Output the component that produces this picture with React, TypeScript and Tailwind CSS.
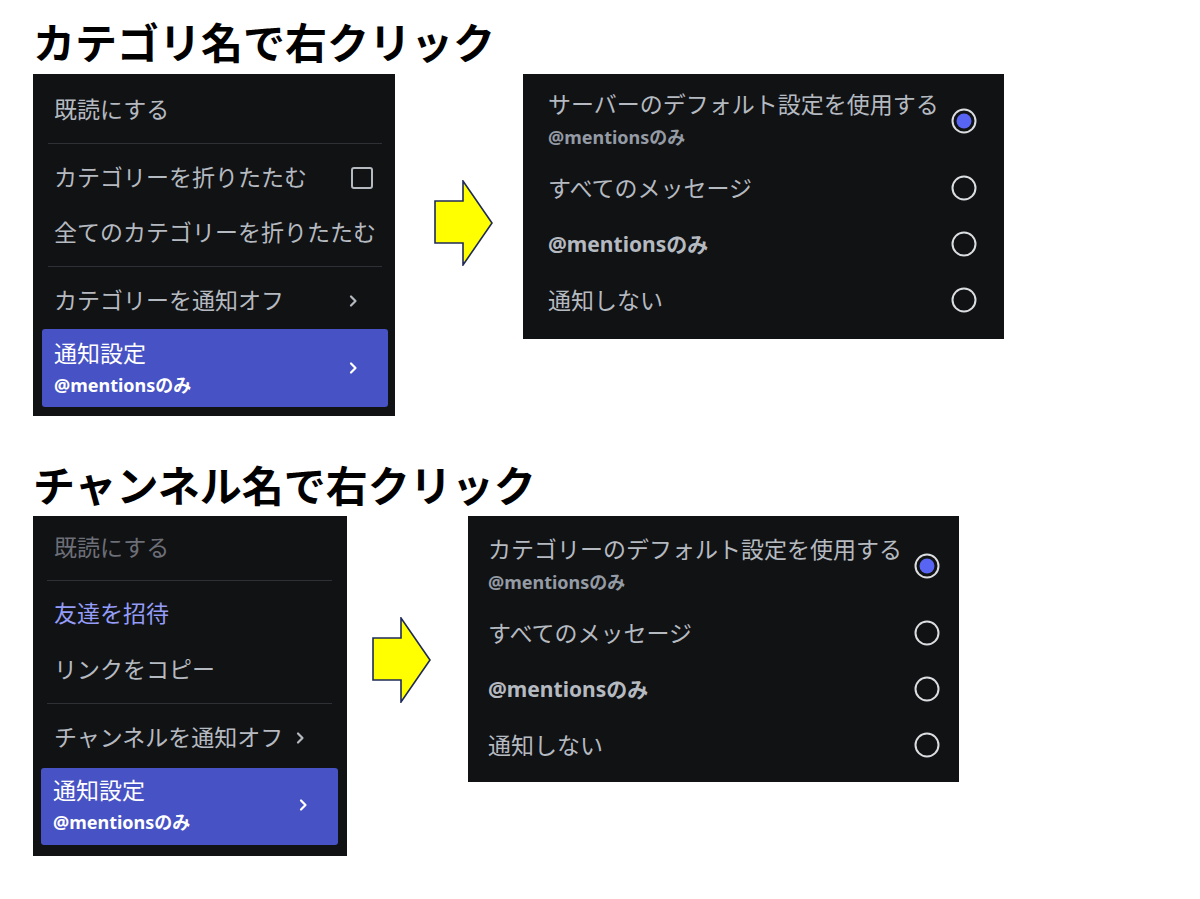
import React from "react";

const jp = { fontFamily: '"Noto Sans", "Noto Sans CJK JP", sans-serif' };

function Chevron({ className }: { className: string }) {
  return (
    <svg width="10" height="14" viewBox="0 0 10 14" className={className}>
      <path d="M3 2.5 L7.5 7 L3 11.5" fill="none" stroke="currentColor" strokeWidth="2.2" strokeLinecap="round" strokeLinejoin="round" />
    </svg>
  );
}

function Radio({ checked }: { checked?: boolean }) {
  return (
    <svg width="26" height="26" viewBox="0 0 26 26">
      <circle cx="13" cy="13" r="11.5" fill="none" stroke="#dbdee1" strokeWidth="2" />
      {checked && <circle cx="13" cy="13" r="7.5" fill="#5865f2" />}
    </svg>
  );
}

function Arrow() {
  return (
    <svg width="60" height="86" viewBox="0 0 60 86">
      <path d="M1 21 H29 V1 L58 43 L29 85 V63 H1 Z" fill="#ffff00" stroke="#1f2a5a" strokeWidth="1.6" strokeLinejoin="miter" />
    </svg>
  );
}

function Sep({ h, cls }: { h: string; cls: string }) {
  return (
    <div className={`${h} flex items-center ${cls}`}>
      <div className="h-px w-full bg-[#2e3035]" />
    </div>
  );
}

function Highlight({ pt, pb, h }: { pt: string; pb: string; h: string }) {
  return (
    <div className={`${h} ${pt} ${pb} flex items-start justify-between rounded-[3px] bg-[#4752c4] pl-[12px] pr-[30px] text-white`}>
      <div className="flex flex-col">
        <span className="text-[23px] leading-[28px]">通知設定</span>
        <span className="mt-[7px] text-[18px] leading-[22px] font-bold">@mentionsのみ</span>
      </div>
      <Chevron className="mt-[22px] text-white" />
    </div>
  );
}

function PanelRow({ label, bold, checked }: { label: string; bold?: boolean; checked?: boolean }) {
  return (
    <div className="flex h-[56px] items-center justify-between">
      <span className={`${bold ? "text-[21px] font-bold" : "text-[23px]"} leading-[30px] text-[#b5bac1]`}>{label}</span>
      <Radio checked={checked} />
    </div>
  );
}

function Panel({ first, cls }: { first: string; cls: string }) {
  return (
    <div className={`flex flex-col bg-[#111214] ${cls}`}>
      <div className="flex h-[78px] items-start justify-between">
        <div className="flex flex-col pt-[7px]">
          <span className="text-[23px] leading-[30px] text-[#b5bac1]">{first}</span>
          <span className="mt-[7px] text-[18px] leading-[22px] font-bold text-[#949ba4]">@mentionsのみ</span>
        </div>
        <div className="self-center">
          <Radio checked />
        </div>
      </div>
      <PanelRow label="すべてのメッセージ" />
      <PanelRow label="@mentionsのみ" bold />
      <PanelRow label="通知しない" />
    </div>
  );
}

export default function App() {
  return (
    <div className="h-[899px] w-[1200px] bg-white" style={jp}>
      {/* category */}
      <div className="pl-[33px] pt-[14px]">
        <h1 className="text-[42px] leading-[58px] font-bold text-black">カテゴリ名で右クリック</h1>
        <div className="mt-[2px] flex items-start">
          <div className="flex h-[342px] w-[362px] flex-col bg-[#111214] pl-[9px] pr-[7px] pt-[8px] pb-[9px]">
            <div className="flex h-[55px] items-center px-[12px] text-[23px] text-[#b5bac1]">既読にする</div>
            <Sep h="h-[13px]" cls="pl-[6px] pr-[6px]" />
            <div className="flex h-[55px] items-center justify-between pl-[12px] pr-[15px] text-[23px] text-[#b5bac1]">
              <span>カテゴリーを折りたたむ</span>
              <div className="h-[22px] w-[22px] rounded-[3px] border-2 border-[#b5bac1]" />
            </div>
            <div className="flex h-[55px] items-center px-[12px] text-[23px] text-[#b5bac1]">全てのカテゴリーを折りたたむ</div>
            <Sep h="h-[13px]" cls="pl-[6px] pr-[6px]" />
            <div className="flex h-[55px] items-center justify-between pl-[12px] pr-[30px] text-[23px] text-[#b5bac1]">
              <span>カテゴリーを通知オフ</span>
              <Chevron className="text-[#b5bac1]" />
            </div>
            <div className="mt-[1px]">
              <Highlight h="h-[78px]" pt="pt-[10px]" pb="pb-[11px]" />
            </div>
          </div>
          <div className="ml-[39px] mt-[106px]">
            <Arrow />
          </div>
          <Panel first="サーバーのデフォルト設定を使用する" cls="ml-[29px] h-[265px] w-[481px] pl-[25px] pr-[27px] pt-[8px] pb-[11px]" />
        </div>
      </div>

      {/* channel */}
      <div className="pl-[33px] pt-[41px]">
        <h1 className="text-[42px] leading-[58px] font-bold text-black">チャンネル名で右クリック</h1>
        <div className="mt-[1px] flex items-start">
          <div className="flex h-[340px] w-[314px] flex-col bg-[#111214] pl-[8px] pr-[9px] pt-[4px] pb-[11px]">
            <div className="flex h-[55px] items-center px-[13px] text-[23px] text-[#6d6f78]">既読にする</div>
            <Sep h="h-[10px]" cls="pl-[6px] pr-[6px]" />
            <div className="flex h-[56px] items-center px-[13px] text-[23px] text-[#949cf7]">友達を招待</div>
            <div className="flex h-[56px] items-center px-[13px] text-[23px] text-[#b5bac1]">リンクをコピー</div>
            <Sep h="h-[13px]" cls="pl-[6px] pr-[6px]" />
            <div className="flex h-[55px] items-center gap-[12px] px-[13px] text-[23px] text-[#b5bac1]">
              <span>チャンネルを通知オフ</span>
              <Chevron className="text-[#b5bac1]" />
            </div>
            <div className="mt-[3px]">
              <Highlight h="h-[77px]" pt="pt-[8px]" pb="pb-[12px]" />
            </div>
          </div>
          <div className="ml-[25px] mt-[101px]">
            <Arrow />
          </div>
          <Panel first="カテゴリーのデフォルト設定を使用する" cls="ml-[36px] h-[266px] w-[491px] pl-[20px] pr-[19px] pt-[11px] pb-[9px]" />
        </div>
      </div>
    </div>
  );
}
